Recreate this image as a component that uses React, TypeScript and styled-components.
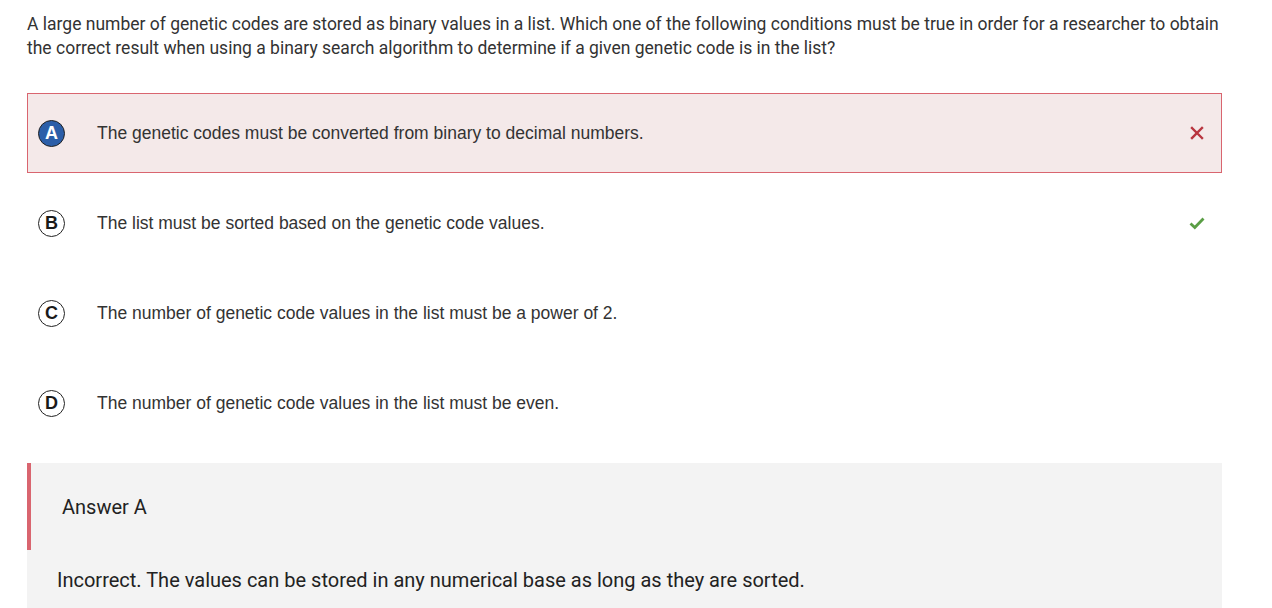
import React from "react";
import styled, { createGlobalStyle } from "styled-components";

const GlobalStyle = createGlobalStyle`
  body {
    margin: 0;
    background: #ffffff;
    font-family: Roboto, "Liberation Sans", sans-serif;
  }
`;

const Page = styled.div`
  width: 1195px;
  padding: 12px 0 0 27px;
`;

const Question = styled.p`
  margin: 0 0 33px;
  font-size: 17.5px;
  line-height: 24px;
  color: #333333;
`;

const Options = styled.div`
  display: flex;
  flex-direction: column;
  gap: 10px;
`;

const Option = styled.div<{ $wrong?: boolean }>`
  display: flex;
  align-items: center;
  height: 80px;
  box-sizing: border-box;
  padding: 0 16px 0 10px;
  border: 1px solid ${(p) => (p.$wrong ? "#d9656f" : "transparent")};
  background: ${(p) => (p.$wrong ? "#f4e9e9" : "transparent")};
`;

const Badge = styled.span<{ $filled?: boolean }>`
  flex: none;
  width: 27px;
  height: 27px;
  box-sizing: border-box;
  border-radius: 50%;
  border: 1.5px solid #222;
  display: flex;
  align-items: center;
  justify-content: center;
  font-family: "Liberation Sans", Arial, sans-serif;
  font-weight: bold;
  font-size: 18px;
  color: ${(p) => (p.$filled ? "#ffffff" : "#1a1a1a")};
  background: ${(p) => (p.$filled ? "#2b5ea8" : "#ffffff")};
`;

const OptionText = styled.span`
  flex: 1;
  margin-left: 32px;
  font-family: "Liberation Sans", Arial, sans-serif;
  font-size: 17.5px;
  color: #333333;
`;

const Mark = styled.span`
  flex: none;
  width: 16px;
  height: 16px;
  display: flex;
  align-items: center;
  justify-content: center;
`;

const Feedback = styled.div`
  margin-top: 20px;
  background: #f3f3f3;
  padding-bottom: 40px;
`;

const FeedbackHead = styled.div`
  height: 87px;
  display: flex;
  align-items: center;
  padding-left: 31px;
  border-left: 4px solid #d9656f;
  font-size: 20px;
  color: #222222;
`;

const FeedbackBody = styled.p`
  margin: 17px 0 0 30px;
  font-size: 20px;
  line-height: 26px;
  color: #222222;
`;

const Cross = () => (
  <svg width="14" height="14" viewBox="0 0 14 14">
    <path d="M2 2 L12 12 M12 2 L2 12" stroke="#b8353f" strokeWidth="2.4" strokeLinecap="square" />
  </svg>
);

const Check = () => (
  <svg width="16" height="14" viewBox="0 0 16 14">
    <path d="M1.5 7.5 L5.8 11.5 L14.5 2.5" fill="none" stroke="#5a9e45" strokeWidth="2.8" />
  </svg>
);

const options = [
  { key: "A", text: "The genetic codes must be converted from binary to decimal numbers.", wrong: true },
  { key: "B", text: "The list must be sorted based on the genetic code values.", correct: true },
  { key: "C", text: "The number of genetic code values in the list must be a power of 2." },
  { key: "D", text: "The number of genetic code values in the list must be even." },
];

export default function App() {
  return (
    <Page>
      <GlobalStyle />
      <Question>
        A large number of genetic codes are stored as binary values in a list. Which one of the following conditions
        must be true in order for a researcher to obtain the correct result when using a binary search algorithm to
        determine if a given genetic code is in the list?
      </Question>
      <Options>
        {options.map((o) => (
          <Option key={o.key} $wrong={o.wrong}>
            <Badge $filled={o.wrong}>{o.key}</Badge>
            <OptionText>{o.text}</OptionText>
            <Mark>{o.wrong ? <Cross /> : o.correct ? <Check /> : null}</Mark>
          </Option>
        ))}
      </Options>
      <Feedback>
        <FeedbackHead>Answer A</FeedbackHead>
        <FeedbackBody>Incorrect. The values can be stored in any numerical base as long as they are sorted.</FeedbackBody>
      </Feedback>
    </Page>
  );
}
